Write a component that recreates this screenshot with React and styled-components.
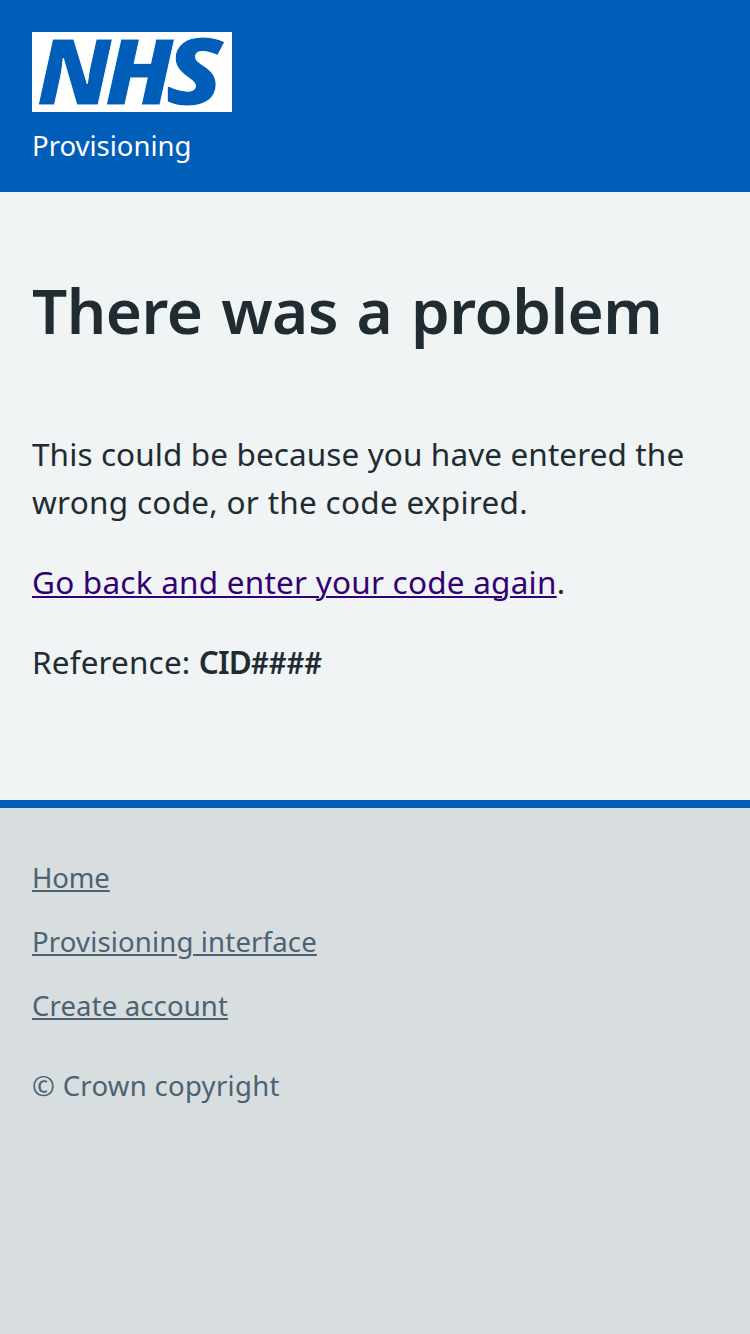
import React from "react";
import styled, { createGlobalStyle } from "styled-components";

const GlobalStyle = createGlobalStyle`
  *, *::before, *::after { box-sizing: border-box; }
  html { background: #d8dde0; }
  body {
    margin: 0;
    color: #212b32;
    font-family: "Noto Sans", "Open Sans", sans-serif;
  }
`;

const Page = styled.div`
  display: flex;
  flex-direction: column;
  min-height: 100vh;
`;

const Header = styled.header`
  display: flex;
  flex-direction: column;
  align-items: flex-start;
  gap: 14px;
  height: 192px;
  padding: 32px 32px 0;
  background: #005eb8;
`;

const LogoSvg = styled.svg`
  display: block;
  width: 200px;
  height: 80px;
  background: #fff;
  fill: #005eb8;
  stroke: #fff;
  stroke-width: 0.8px;
  font-family: "Noto Sans", "Open Sans", sans-serif;
  font-size: 92.4px;
  font-style: italic;
  font-weight: 900;
`;

const ServiceName = styled.span`
  color: #fff;
  font-size: 27.5px;
  line-height: 40px;
`;

const Main = styled.main`
  height: 608px;
  padding: 82px 32px 0;
  background: #f0f4f5;
`;

const Title = styled.h1`
  margin: 0 0 84px;
  font-size: 62px;
  font-weight: 600;
  line-height: 72px;
  letter-spacing: -0.5px;
  word-spacing: 3px;
  white-space: nowrap;
`;

const Paragraph = styled.p`
  margin: 0 0 32px;
  font-size: 31.5px;
  line-height: 48px;
`;

const Line = styled.span`
  display: block;
  white-space: nowrap;
  letter-spacing: ${(p) => p.$spacing};
`;

const linkStyle = `
  text-decoration-line: underline;
  text-decoration-thickness: 2px;
  text-underline-offset: 2px;
`;

const Link = styled.a`
  color: #330072;
  letter-spacing: 0.225px;
  ${linkStyle}
`;

const Code = styled.strong`
  font-weight: 600;
  letter-spacing: -0.9px;
`;

const Hashes = styled.span`
  font-family: Lato, "Noto Sans", sans-serif;
  font-size: 31px;
  line-height: 1;
  letter-spacing: -0.2px;
`;

const Footer = styled.footer`
  flex: 1;
  padding: 50px 32px 0;
  border-top: 8px solid #005eb8;
  background: #d8dde0;
  color: #4c6272;
  font-size: 27.5px;
  line-height: 40px;
`;

const FooterList = styled.ul`
  display: flex;
  flex-direction: column;
  align-items: flex-start;
  gap: 24px;
  margin: 0 0 40px;
  padding: 0;
  list-style: none;
`;

const FooterLink = styled.a`
  color: inherit;
  letter-spacing: ${(p) => p.$spacing};
  ${linkStyle}
`;

const Copyright = styled.p`
  margin: 0;
  letter-spacing: 0.3px;
`;

const footerLinks = [
  { label: "Home", spacing: "-0.12px" },
  { label: "Provisioning interface", spacing: "0.17px" },
  { label: "Create account", spacing: "0.14px" },
];

function Logo() {
  return (
    <LogoSvg viewBox="0 0 200 80" role="img" aria-label="NHS">
      <text transform="translate(4.8 73) scale(1.03 1)">N</text>
      <text transform="translate(72.8 73) scale(1.05 1)">H</text>
      <text transform="translate(133 72.8) scale(1.16 1.02)">S</text>
    </LogoSvg>
  );
}

export default function App() {
  return (
    <Page>
      <GlobalStyle />
      <Header>
        <Logo />
        <ServiceName>Provisioning</ServiceName>
      </Header>
      <Main>
        <Title>There was a problem</Title>
        <Paragraph>
          <Line $spacing="0.1px">This could be because you have entered the</Line>
          <Line $spacing="0.28px">wrong code, or the code expired.</Line>
        </Paragraph>
        <Paragraph>
          <Link>Go back and enter your code again</Link>.
        </Paragraph>
        <Paragraph>
          <Line $spacing="0.15px">
            Reference: <Code>CID<Hashes>####</Hashes></Code>
          </Line>
        </Paragraph>
      </Main>
      <Footer>
        <FooterList>
          {footerLinks.map(({ label, spacing }) => (
            <li key={label}>
              <FooterLink $spacing={spacing}>{label}</FooterLink>
            </li>
          ))}
        </FooterList>
        <Copyright>© Crown copyright</Copyright>
      </Footer>
    </Page>
  );
}
